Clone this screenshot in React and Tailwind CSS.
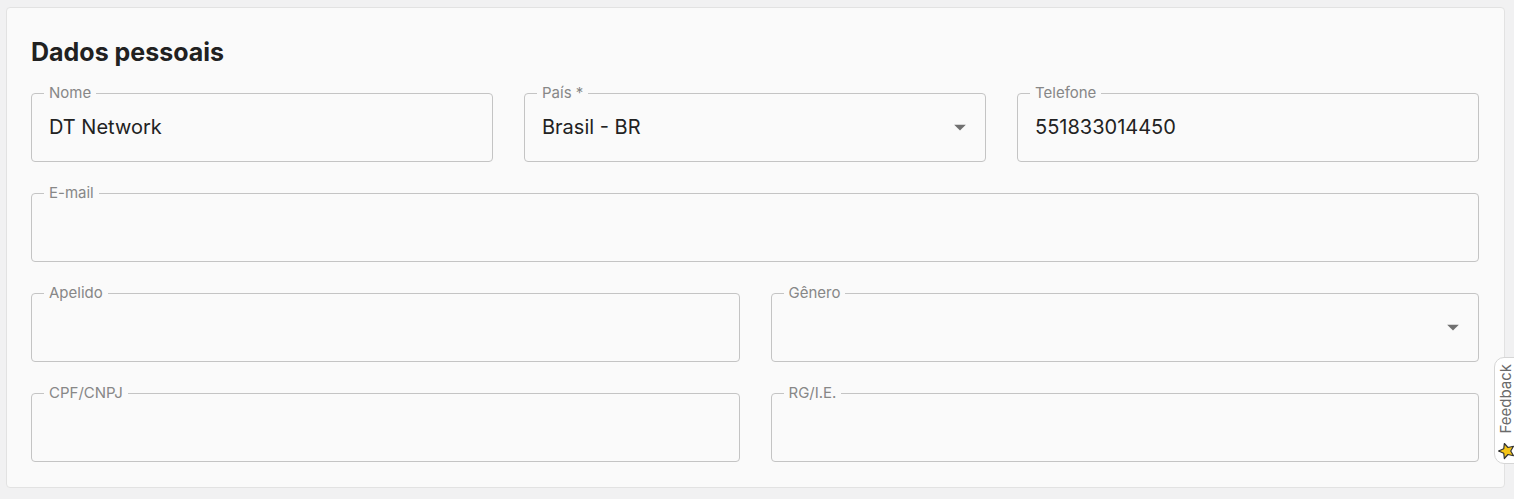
import React from 'react';

const font = { fontFamily: 'Inter, "Noto Sans", sans-serif' };

const Field = ({ label, value, select, className = '' }) => (
  <fieldset className={`h-[77px] border border-[#c4c4c4] rounded-[4px] px-[12px] min-w-0 ${className}`}>
    <legend className="px-[5px] text-[15px] leading-[16px] text-[#878787]">{label}</legend>
    <div className="flex items-center h-[60px] pb-[8px] pl-[5px]">
      <span className="flex-1 text-[20px] text-[#222222] truncate">{value}</span>
      {select && (
        <svg className="w-[28px] h-[28px] text-[#707070] mr-[-1px]" viewBox="0 0 24 24" fill="currentColor">
          <path d="M7 10l5 5 5-5z" />
        </svg>
      )}
    </div>
  </fieldset>
);

export default function App() {
  return (
    <div className="w-[1514px] h-[499px] bg-[#f1f1f2] pt-[7px] pl-[6px] overflow-hidden relative" style={font}>
      <div className="w-[1499px] h-[481px] bg-[#fafafa] border border-[#e2e2e2] rounded-[4px] px-[24px] pt-[28px]">
        <h2 className="text-[25px] font-bold leading-[32px] text-[#212121]">Dados pessoais</h2>
        <div className="mt-[17px] flex flex-col gap-[23px] pr-[1px]">
          <div className="grid grid-cols-3 gap-[31px]">
            <Field label="Nome" value="DT Network" />
            <Field label="País *" value="Brasil - BR" select />
            <Field label="Telefone" value="551833014450" />
          </div>
          <Field label="E-mail" value="" />
          <div className="grid grid-cols-2 gap-[31px]">
            <Field label="Apelido" value="" />
            <Field label="Gênero" value="" select />
          </div>
          <div className="grid grid-cols-2 gap-[31px]">
            <Field label="CPF/CNPJ" value="" />
            <Field label="RG/I.E." value="" />
          </div>
        </div>
      </div>
      <div className="absolute left-[1494px] top-[357px] w-[30px] h-[107px] bg-white border border-[#d6d6d6] rounded-l-[10px] flex flex-col items-center pt-[6px]">
        <span className="text-[15px] text-[#6a6a6a] leading-[16px] [writing-mode:vertical-rl] rotate-180 ml-[-6px]">Feedback</span>
        <svg className="mt-[8px] ml-[-6px] w-[18px] h-[18px] -rotate-90" viewBox="0 0 24 24">
          <path d="M12 2l3 7 7 .8-5.3 4.8 1.6 7.4L12 18.3 5.7 22l1.6-7.4L2 9.8 9 9z" fill="#f5c518" stroke="#333" strokeWidth="1.6" strokeLinejoin="round" />
        </svg>
      </div>
    </div>
  );
}
